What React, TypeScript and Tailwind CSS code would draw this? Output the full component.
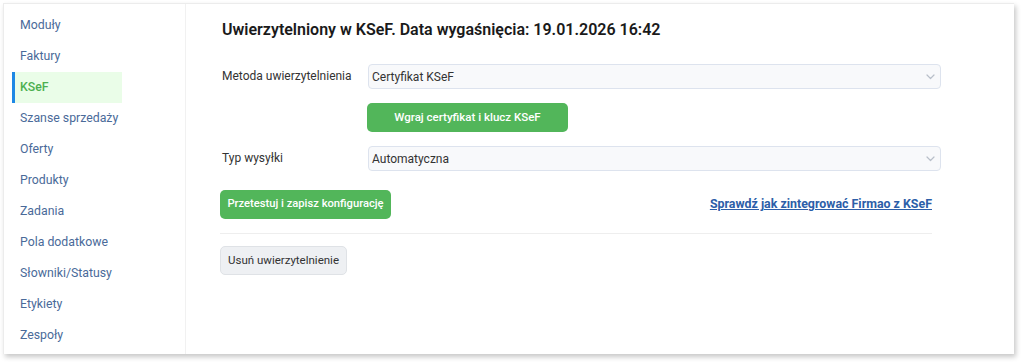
import React from "react";

const items = [
  "Moduły",
  "Faktury",
  "KSeF",
  "Szanse sprzedaży",
  "Oferty",
  "Produkty",
  "Zadania",
  "Pola dodatkowe",
  "Słowniki/Statusy",
  "Etykiety",
  "Zespoły",
];

function Chevron() {
  return (
    <svg width="9" height="6" viewBox="0 0 9 6" fill="none">
      <path d="M1 1l3.5 3.5L8 1" stroke="#b8bfc9" strokeWidth="1.2" strokeLinecap="round" strokeLinejoin="round" />
    </svg>
  );
}

function Select({ value }: { value: string }) {
  return (
    <div className="w-[573px] h-[25px] rounded-[4px] border border-[#dde3ee] bg-[#f8f9fb] flex items-center justify-between pl-[3px] pr-[5px] text-[12px] text-[#333]">
      <span>{value}</span>
      <Chevron />
    </div>
  );
}

export default function App() {
  return (
    <div className="w-[1024px] h-[364px] bg-white pt-[3px] pl-[3px]" style={{ fontFamily: "Roboto, 'Noto Sans', sans-serif" }}>
      <div className="w-[1011px] h-[351px] bg-white shadow-[2px_3px_5px_rgba(0,0,0,0.22)] border-l border-t border-[#ececec] flex">
        <div className="w-[182px] shrink-0 pt-[6px] pl-[8px] border-r border-[#f1f1f1]">
          {items.map((it) => {
            const active = it === "KSeF";
            return (
              <div
                key={it}
                className={
                  active
                    ? "w-[110px] h-[31px] flex items-center whitespace-nowrap pl-[5px] border-l-[3px] border-[#1e88e5] bg-[#eafde8] text-[#4caf50] text-[12.3px] font-medium"
                    : "w-[110px] h-[31px] flex items-center whitespace-nowrap pl-[8px] text-[#4a6a99] text-[12.3px]"
                }
              >
                {it}
              </div>
            );
          })}
        </div>
        <div className="flex-1 pl-[36px] pt-[16px]">
          <div className="text-[16px] font-semibold text-[#1a1a1a] leading-[20px]">
            Uwierzytelniony w KSeF. Data wygaśnięcia: 19.01.2026 16:42
          </div>
          <div className="mt-[24px] flex">
            <div className="w-[146px] text-[12px] text-[#333] pt-[3px]">Metoda uwierzytelnienia</div>
            <div className="flex flex-col">
              <Select value="Certyfikat KSeF" />
              <button className="mt-[14px] w-[201px] h-[29px] rounded-[5px] bg-[#52b65a] text-white text-[11.5px] font-medium -ml-[1px]">
                Wgraj certyfikat i klucz KSeF
              </button>
            </div>
          </div>
          <div className="mt-[14px] flex">
            <div className="w-[146px] text-[12px] text-[#333] pt-[3px]">Typ wysyłki</div>
            <Select value="Automatyczna" />
          </div>
          <div className="mt-[19px] w-[712px] -ml-[2px] flex items-center justify-between">
            <button className="w-[171px] h-[29px] rounded-[5px] bg-[#52b65a] text-white text-[11.2px] font-medium">
              Przetestuj i zapisz konfigurację
            </button>
            <a className="text-[12.4px] font-bold text-[#2c5ea8] underline">Sprawdź jak zintegrować Firmao z KSeF</a>
          </div>
          <div className="mt-[14px] w-[712px] -ml-[2px] border-t border-[#eeeeee]" />
          <button className="mt-[12px] -ml-[2px] w-[127px] h-[29px] rounded-[5px] bg-[#eef0f3] border border-[#dfe2e6] text-[#333] text-[11.5px]">
            Usuń uwierzytelnienie
          </button>
        </div>
      </div>
    </div>
  );
}
